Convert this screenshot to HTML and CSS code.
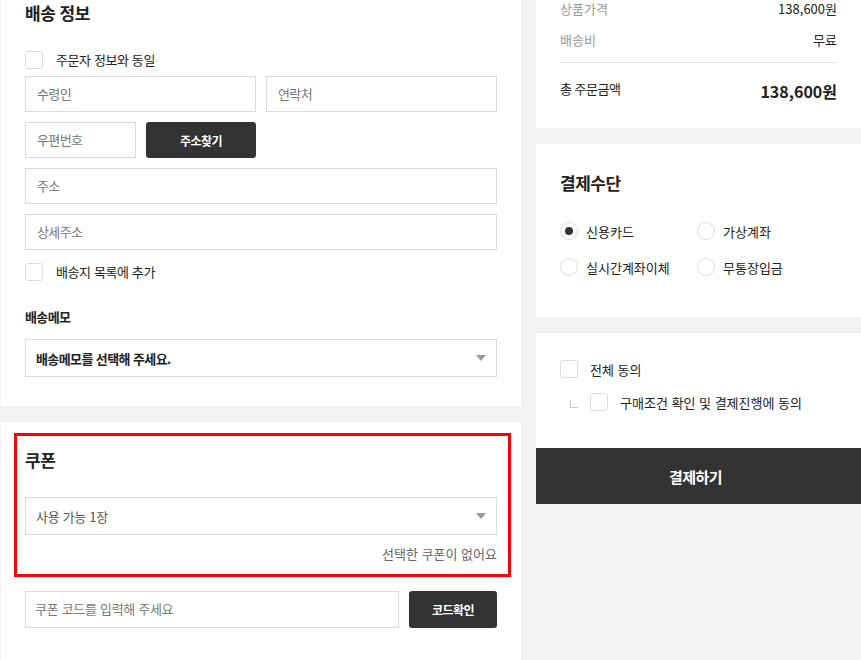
FILE: index.html
```html
<!DOCTYPE html>
<html lang="ko">
<head>
    <meta charset="UTF-8">
    <meta name="viewport" content="width=device-width, initial-scale=1.0">
    <title>주문서 작성</title>
    <link rel="stylesheet" href="styles.css">
</head>
<body>
    <div class="page">
        <!-- Left column -->
        <div class="left-col">
            <div class="card shipping-card">
                <h2 class="card-title">배송 정보</h2>

                <label class="check-row same-row">
                    <span class="check-box"></span>
                    <span class="check-label">주문자 정보와 동일</span>
                </label>

                <div class="field-row">
                    <input class="field" type="text" placeholder="수령인">
                    <input class="field" type="text" placeholder="연락처">
                </div>
                <div class="field-row">
                    <input class="field zip" type="text" placeholder="우편번호">
                    <button class="dark-btn zip-btn">주소찾기</button>
                </div>
                <div class="field-row">
                    <input class="field" type="text" placeholder="주소">
                </div>
                <div class="field-row">
                    <input class="field" type="text" placeholder="상세주소">
                </div>

                <label class="check-row add-row">
                    <span class="check-box"></span>
                    <span class="check-label">배송지 목록에 추가</span>
                </label>

                <div class="memo-label">배송메모</div>
                <div class="select memo-select">
                    <span>배송메모를 선택해 주세요.</span>
                    <span class="arrow"></span>
                </div>
            </div>

            <div class="card coupon-card">
                <h2 class="card-title">쿠폰</h2>
                <div class="select coupon-select">
                    <span>사용 가능 1장</span>
                    <span class="arrow"></span>
                </div>
                <div class="coupon-note">선택한 쿠폰이 없어요</div>

                <div class="code-row">
                    <input class="field code-input" type="text" placeholder="쿠폰 코드를 입력해 주세요">
                    <button class="dark-btn code-btn">코드확인</button>
                </div>

                <div class="highlight-frame"></div>
            </div>
        </div>

        <!-- Right column -->
        <div class="right-col">
            <div class="card summary-card">
                <div class="sum-row">
                    <span class="sum-key">상품가격</span>
                    <span class="sum-val">138,600원</span>
                </div>
                <div class="sum-row second">
                    <span class="sum-key">배송비</span>
                    <span class="sum-val">무료</span>
                </div>
                <hr class="sum-line">
                <div class="sum-row total">
                    <span class="total-key">총 주문금액</span>
                    <span class="total-val">138,600원</span>
                </div>
            </div>

            <div class="card pay-card">
                <h2 class="card-title">결제수단</h2>
                <div class="radio-grid">
                    <label class="radio-item"><span class="radio on"></span>신용카드</label>
                    <label class="radio-item"><span class="radio"></span>가상계좌</label>
                    <label class="radio-item"><span class="radio"></span>실시간계좌이체</label>
                    <label class="radio-item"><span class="radio"></span>무통장입금</label>
                </div>
            </div>

            <div class="card agree-card">
                <label class="agree-row">
                    <span class="check-box"></span>
                    <span>전체 동의</span>
                </label>
                <label class="agree-row sub">
                    <span class="tree-mark"></span>
                    <span class="check-box"></span>
                    <span>구매조건 확인 및 결제진행에 동의</span>
                </label>
            </div>
            <button class="pay-btn">결제하기</button>
        </div>
    </div>
</body>
</html>
```

FILE: styles.css
```css
body {
    margin: 0;
    background-color: #f2f2f2;
    font-family: "Noto Sans CJK KR", "Noto Sans", sans-serif;
    color: #222;
    font-size: 13px;
    overflow: hidden;
}

.page {
    display: flex;
    gap: 15px;
    padding-left: 1px;
    margin-top: -20px;
}

.left-col {
    width: 520px;
    display: flex;
    flex-direction: column;
    gap: 16px;
}

.right-col {
    flex: 1;
    display: flex;
    flex-direction: column;
}

.card {
    background-color: #ffffff;
    box-sizing: border-box;
}

.card-title {
    margin: 0;
    font-size: 17px;
    line-height: 26px;
    font-weight: 700;
    letter-spacing: -0.5px;
    color: #222;
}

/* shipping */
.shipping-card {
    padding: 20px 24px 29px 24px;
}

.check-row {
    display: flex;
    align-items: center;
    gap: 13px;
    height: 18px;
}

.same-row {
    margin-top: 25px;
}

.add-row {
    margin-top: 13px;
}

.check-box {
    width: 18px;
    height: 18px;
    box-sizing: border-box;
    border: 1px solid #dcdcdc;
    border-radius: 3px;
    background: #fff;
    flex-shrink: 0;
}

.check-label {
    font-size: 13px;
    letter-spacing: -0.4px;
    color: #222;
    margin-top: -2px;
}

.field-row {
    display: flex;
    gap: 10px;
    margin-top: 10px;
}

.same-row + .field-row {
    margin-top: 7px;
}

.field {
    flex: 1;
    min-width: 0;
    height: 36px;
    box-sizing: border-box;
    border: 1px solid #dadada;
    border-radius: 0;
    padding: 0 11px 2px 11px;
    font-family: inherit;
    font-size: 13px;
    letter-spacing: -0.6px;
    color: #222;
    background: #fff;
    outline: none;
}

.field::placeholder {
    color: #777;
}

.zip {
    flex: 0 0 111px;
}

.dark-btn {
    background-color: #333;
    color: #fff;
    border: none;
    border-radius: 3px;
    font-family: inherit;
    font-weight: 700;
    font-size: 12px;
    letter-spacing: -0.5px;
    padding: 0;
}

.zip-btn {
    width: 110px;
    height: 36px;
}

.memo-label {
    margin-top: 26px;
    line-height: 20px;
    font-size: 13px;
    font-weight: 700;
    letter-spacing: -0.6px;
}

.select {
    display: flex;
    justify-content: space-between;
    align-items: center;
    height: 38px;
    box-sizing: border-box;
    border: 1px solid #dadada;
    padding: 0 10px 0 10px;
    font-size: 13px;
    letter-spacing: -0.6px;
}

.memo-select {
    margin-top: 12px;
    font-weight: 700;
    color: #222;
}

.arrow {
    width: 0;
    height: 0;
    border-left: 5px solid transparent;
    border-right: 5px solid transparent;
    border-top: 6px solid #9a9a9a;
}

/* coupon */
.coupon-card {
    position: relative;
    padding: 25px 24px 40px 24px;
}

.coupon-select {
    margin-top: 24px;
    color: #555;
    letter-spacing: -0.3px;
}

.coupon-note {
    margin-top: 9px;
    line-height: 20px;
    text-align: right;
    color: #666;
    font-size: 13px;
}

.code-row {
    display: flex;
    gap: 10px;
    margin-top: 27px;
}

.code-input {
    height: 37px;
    padding: 0 9px 2px 9px;
    letter-spacing: -0.3px;
}

.code-btn {
    width: 88px;
    height: 37px;
}

.highlight-frame {
    position: absolute;
    top: 11px;
    left: 13px;
    width: 497px;
    height: 144px;
    box-sizing: border-box;
    border: 3px solid #ff0000;
    pointer-events: none;
}

/* summary */
.summary-card {
    padding: 20px 24px 25px 24px;
}

.sum-row {
    display: flex;
    justify-content: space-between;
    align-items: center;
    line-height: 18px;
}

.sum-row.second {
    margin-top: 13px;
}

.sum-key {
    color: #999;
    font-size: 13px;
}

.sum-val {
    color: #222;
    font-size: 13px;
}

.sum-line {
    margin: 13px 0 0 0;
    border: none;
    border-top: 1px solid #e3e3e3;
}

.sum-row.total {
    margin-top: 16px;
    line-height: 24px;
}

.total-key {
    font-size: 13px;
    letter-spacing: -0.5px;
    color: #222;
    margin-top: -4px;
}

.total-val {
    font-size: 16px;
    font-weight: 700;
    color: #222;
}

/* payment */
.pay-card {
    margin-top: 16px;
    padding: 26px 24px 41px 24px;
}

.radio-grid {
    display: grid;
    grid-template-columns: 137px 1fr;
    row-gap: 18px;
    margin-top: 26px;
}

.radio-item {
    display: flex;
    align-items: center;
    gap: 8px;
    height: 18px;
    font-size: 13px;
    color: #222;
}

.radio {
    width: 18px;
    height: 18px;
    box-sizing: border-box;
    border: 1px solid #dcdcdc;
    border-radius: 50%;
    display: flex;
    align-items: center;
    justify-content: center;
}

.radio.on::after {
    content: "";
    width: 8px;
    height: 8px;
    border-radius: 50%;
    background: #333;
}

/* agreement */
.agree-card {
    margin-top: 16px;
    padding: 27px 24px 37px 24px;
}

.agree-row {
    display: flex;
    align-items: center;
    gap: 12px;
    height: 18px;
    font-size: 13px;
    color: #222;
}

.agree-row.sub {
    margin-top: 15px;
    padding-left: 10px;
}

.tree-mark {
    width: 7px;
    height: 7px;
    border-left: 1px solid #c8c8c8;
    border-bottom: 1px solid #c8c8c8;
    margin-top: 4px;
}

.pay-btn {
    height: 56px;
    border: none;
    background-color: #333;
    color: #fff;
    font-family: inherit;
    font-weight: 700;
    font-size: 15px;
    letter-spacing: -0.5px;
    padding-right: 12px;
}
```
